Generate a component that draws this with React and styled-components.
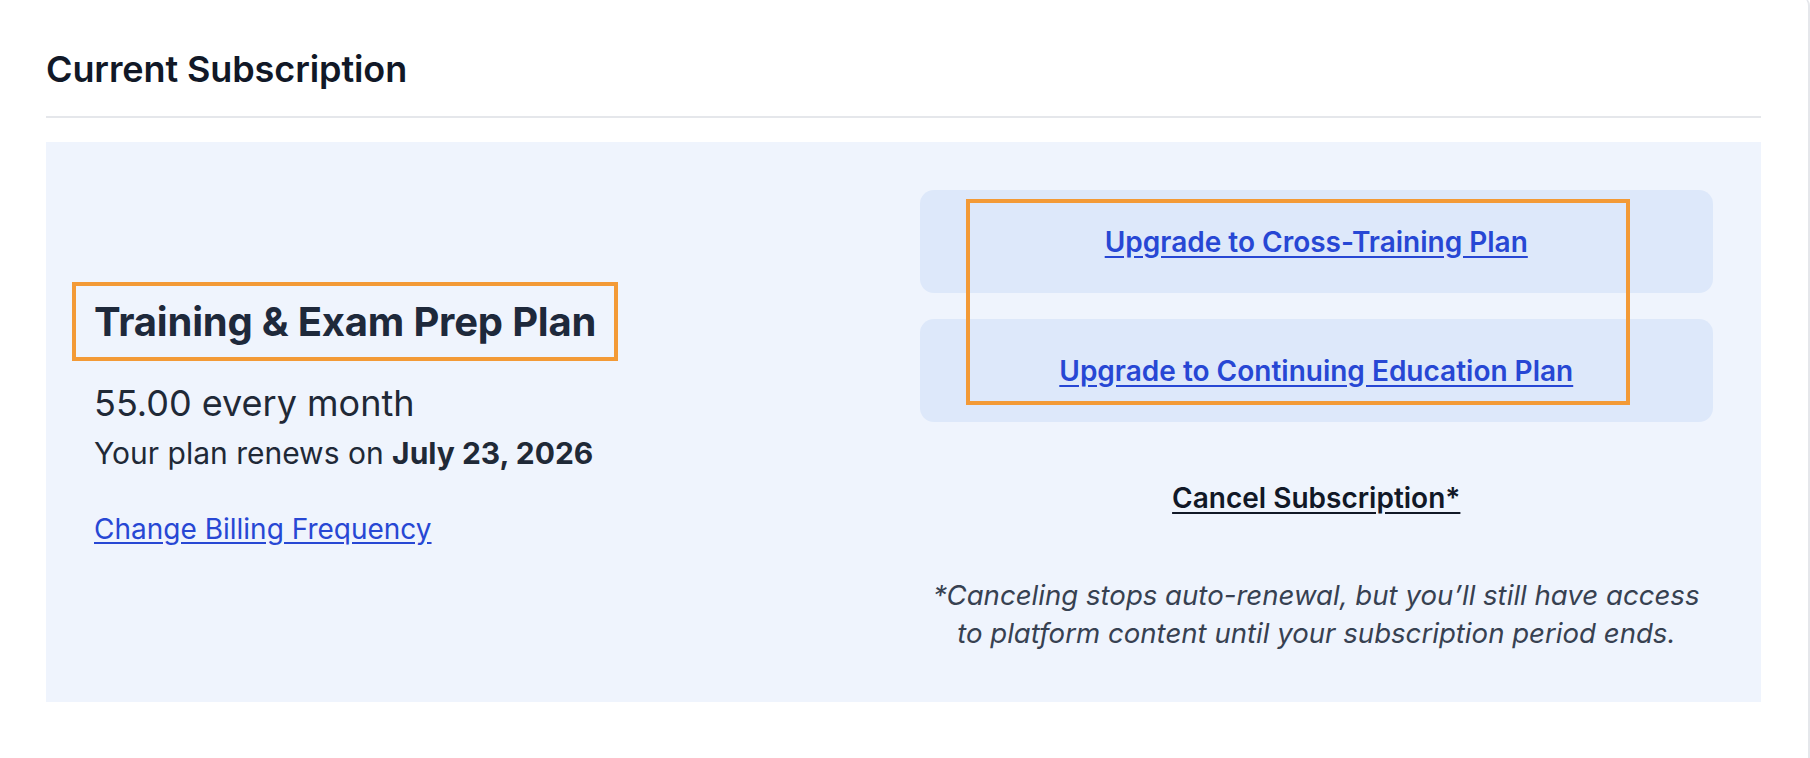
import React from "react";
import styled, { createGlobalStyle } from "styled-components";

const Global = createGlobalStyle`
  html, body {
    margin: 0;
    padding: 0;
    background: #ffffff;
  }
  body {
    font-family: Inter, "Noto Sans", "Liberation Sans", sans-serif;
    color: #1f2937;
    -webkit-font-smoothing: antialiased;
  }
`;

const Sheet = styled.div`
  box-sizing: border-box;
  width: 1810px;
  min-height: 762px;
  margin-top: -4px;
  padding: 51px 48px 0 46px;
  background: #ffffff;
  border-right: 2px solid #e5e7eb;
  border-top-right-radius: 10px;
`;

const Section = styled.section`
  width: 1715px;
`;

const SectionTitle = styled.h2`
  margin: 0;
  padding-bottom: 25px;
  font-size: 36px;
  line-height: 44px;
  font-weight: 600;
  color: #111827;
  letter-spacing: -0.1px;
  border-bottom: 2px solid #e5e7eb;
`;

const Panel = styled.div`
  margin-top: 24px;
  padding: 48px 48px 50px;
  background: #eff4fd;
  display: grid;
  grid-template-columns: 1fr 1fr;
  column-gap: 32px;
  align-items: center;
`;

const PlanColumn = styled.div`
  display: flex;
  flex-direction: column;
  align-items: flex-start;
  padding-bottom: 14px;
`;

const Highlight = styled.div`
  margin-left: -22px;
  border: 4px solid #f39a36;
  padding: 12px 18px 11px 18px;
`;

const PlanName = styled.h3`
  margin: 0;
  font-size: 40px;
  line-height: 48px;
  font-weight: 700;
  color: #1e293b;
  letter-spacing: -0.2px;
`;

const Price = styled.p`
  margin: 20px 0 0;
  font-size: 36px;
  line-height: 44px;
  font-weight: 400;
  color: #1f2937;
`;

const Renewal = styled.p`
  margin: 9px 0 0;
  font-size: 30px;
  line-height: 38px;
  color: #1f2937;

  strong {
    font-weight: 700;
  }
`;

const TextLink = styled.a`
  margin-top: 39px;
  font-size: 28px;
  line-height: 36px;
  color: #2747d4;
  text-decoration: underline;
  text-underline-offset: 3px;
  cursor: pointer;
`;

const ActionColumn = styled.div`
  position: relative;
  display: flex;
  flex-direction: column;
  align-items: stretch;
`;

const UpgradeCard = styled.div`
  height: 103px;
  border-radius: 14px;
  background: #dde8fa;
  display: flex;
  align-items: center;
  justify-content: center;

  & + & {
    margin-top: 26px;
  }
`;

const UpgradeLink = styled.a`
  font-size: 28px;
  line-height: 34px;
  font-weight: 600;
  color: #2747d4;
  text-decoration: underline;
  text-underline-offset: 4px;
  cursor: pointer;
`;

const CancelLink = styled.a`
  align-self: center;
  margin-top: 59px;
  font-size: 28px;
  line-height: 34px;
  font-weight: 600;
  color: #111827;
  text-decoration: underline;
  text-underline-offset: 4px;
  cursor: pointer;
`;

const Footnote = styled.p`
  margin: 61px 0 0;
  font-size: 27.6px;
  line-height: 38px;
  font-style: italic;
  color: #374151;
  text-align: center;
  white-space: nowrap;
`;

const FocusRing = styled.div`
  position: absolute;
  left: 46px;
  top: 9px;
  width: 664px;
  height: 206px;
  box-sizing: border-box;
  border: 4px solid #f39a36;
  pointer-events: none;
`;

const upgrades = [
  "Upgrade to Cross-Training Plan",
  "Upgrade to Continuing Education Plan",
];

export default function App() {
  return (
    <>
      <Global />
      <Sheet>
        <Section>
          <SectionTitle>Current Subscription</SectionTitle>
          <Panel>
            <PlanColumn>
              <Highlight>
                <PlanName>Training &amp; Exam Prep Plan</PlanName>
              </Highlight>
              <Price>55.00 every month</Price>
              <Renewal>
                Your plan renews on <strong>July 23, 2026</strong>
              </Renewal>
              <TextLink>Change Billing Frequency</TextLink>
            </PlanColumn>
            <ActionColumn>
              {upgrades.map((label) => (
                <UpgradeCard key={label}>
                  <UpgradeLink>{label}</UpgradeLink>
                </UpgradeCard>
              ))}
              <FocusRing />
              <CancelLink>Cancel Subscription*</CancelLink>
              <Footnote>
                *Canceling stops auto-renewal, but you’ll still have access
                <br />
                to platform content until your subscription period ends.
              </Footnote>
            </ActionColumn>
          </Panel>
        </Section>
      </Sheet>
    </>
  );
}
